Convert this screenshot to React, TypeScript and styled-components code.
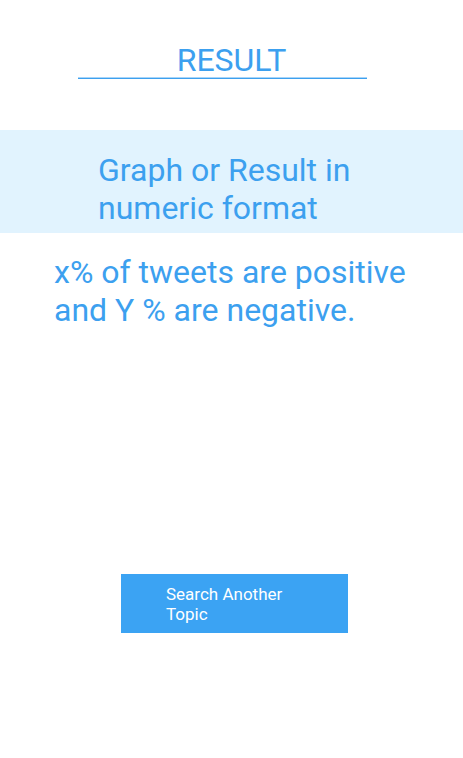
import React from "react";
import styled, { createGlobalStyle } from "styled-components";

const Global = createGlobalStyle`
  html, body { margin: 0; padding: 0; background: #ffffff; }
  body { font-family: Roboto, "Noto Sans", sans-serif; }
`;

const Page = styled.div`
  width: 463px;
  height: 758px;
  display: flex;
  flex-direction: column;
  background: #ffffff;
  color: #3ca0ef;
`;

const Header = styled.div`
  padding-top: 44px;
  display: flex;
  flex-direction: column;
  align-items: center;
`;

const Title = styled.h1`
  margin: 0;
  font-weight: 400;
  font-size: 32px;
  line-height: 33px;
  letter-spacing: 0;
  color: #3ca0ef;
  text-align: center;
`;

const Rule = styled.div`
  margin-left: 78px;
  width: 289px;
  height: 2px;
  align-self: flex-start;
  background: linear-gradient(to bottom, #a9d5f8 0, #a9d5f8 1px, #3ca0ef 1px, #3ca0ef 2px);
`;

const Band = styled.div`
  margin-top: 51px;
  height: 103px;
  background: #e1f3fe;
  padding: 21px 0 0 98px;
  box-sizing: border-box;
`;

const BandText = styled.p`
  margin: 0;
  font-size: 32px;
  line-height: 38px;
  color: #3ca0ef;
`;

const Summary = styled.p`
  margin: 20px 0 0 54px;
  font-size: 32px;
  line-height: 38px;
  color: #3ca0ef;
`;

const Footer = styled.div`
  margin-top: 245px;
  display: flex;
  padding-left: 121px;
`;

const Button = styled.button`
  width: 227px;
  height: 59px;
  border: none;
  border-radius: 0;
  background: #3ba3f3;
  color: #ffffff;
  font-family: Roboto, "Noto Sans", sans-serif;
  font-size: 17px;
  line-height: 20px;
  text-align: left;
  padding: 0 0 0 45px;
  cursor: pointer;
`;

export default function App() {
  return (
    <>
      <Global />
      <Page>
        <Header>
          <Title>RESULT</Title>
          <Rule />
        </Header>
        <Band>
          <BandText>
            Graph or Result in
            <br />
            numeric format
          </BandText>
        </Band>
        <Summary>
          x% of tweets are positive
          <br />
          and Y % are negative.
        </Summary>
        <Footer>
          <Button>
            Search Another
            <br />
            Topic
          </Button>
        </Footer>
      </Page>
    </>
  );
}
